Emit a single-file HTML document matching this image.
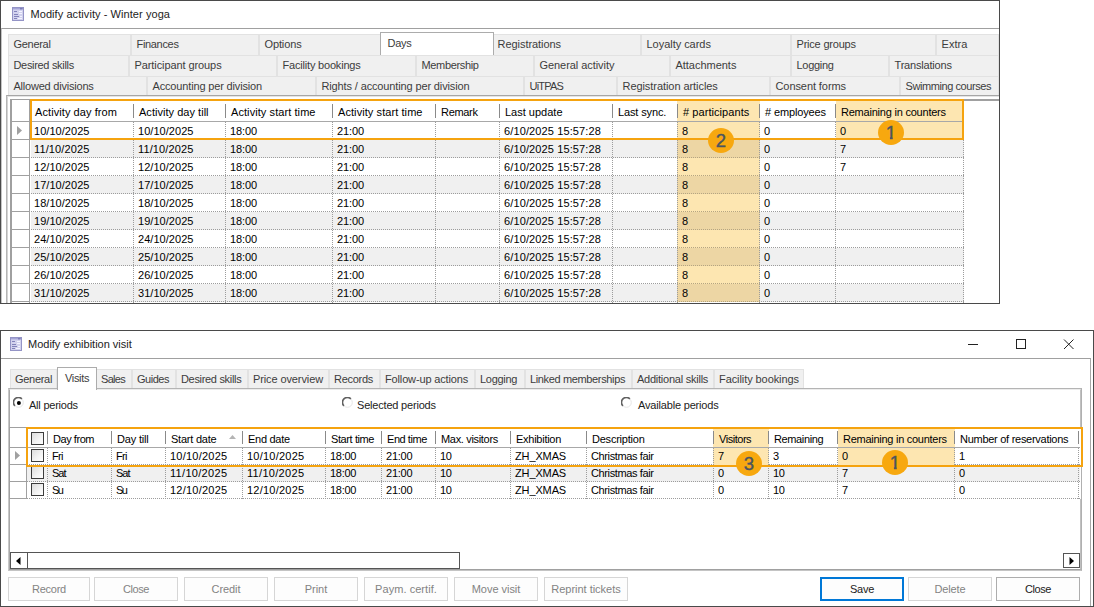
<!DOCTYPE html>
<html><head><meta charset="utf-8"><title>Modify activity</title>
<style>
html,body{margin:0;padding:0;background:#fff;}
body{width:1094px;height:607px;position:relative;overflow:hidden;font-family:"Liberation Sans",Arial,sans-serif;font-size:11px;color:#000;}
.a{position:absolute;box-sizing:border-box;}
.t{position:absolute;white-space:nowrap;line-height:14px;height:14px;}
.tab{position:absolute;box-sizing:border-box;background:#f0f0f0;border:1px solid #e2e2e2;color:#3c3c3c;white-space:nowrap;overflow:hidden;}
.tab span{position:absolute;left:4.5px;top:2px;line-height:14px;}
.seltab{position:absolute;box-sizing:border-box;background:#fff;border:1px solid #acacac;border-bottom:none;color:#3c3c3c;white-space:nowrap;}
.seltab span{position:absolute;left:6.5px;top:3px;line-height:14px;}
.btn{position:absolute;box-sizing:border-box;height:24px;top:577px;border:1px solid #d6d6d6;background:#fdfdfd;color:#838383;text-align:center;line-height:22px;white-space:nowrap;}
.circ{position:absolute;width:26px;height:25px;border-radius:50%;background:#f7a80f;color:#4b5560;font-size:18.5px;line-height:26.4px;text-align:center;-webkit-text-stroke:0.4px #4b5560;}
.one{display:inline-block;clip-path:polygon(0 0,100% 0,100% 17.3px,6.9px 17.3px,6.9px 100%,4.1px 100%,4.1px 17.3px,0 17.3px);}
</style></head><body>

<div class="a" style="left:0;top:0;width:1000px;height:304px;background:#fff;"></div>
<div class="a" style="left:1px;top:28px;width:998px;height:275px;border-top:1px solid #a0a0a0;border-left:1px solid #c4c4c4;"></div>
<svg class="a" style="left:12px;top:7px" width="12" height="14" viewBox="0 0 12 14"><rect x="0.5" y="0.5" width="11" height="13" fill="#d2d2ee" stroke="#9494c6"/><rect x="1" y="1" width="10" height="1.4" fill="#a4a4d6"/><rect x="8" y="1" width="2.5" height="1.4" fill="#7c7cb6"/><g stroke="#8282ba" stroke-width="1"><line x1="2" y1="4.5" x2="5" y2="4.5"/><line x1="2" y1="7.5" x2="6" y2="7.5"/><line x1="2" y1="9.5" x2="7" y2="9.5"/><line x1="2" y1="11.5" x2="5" y2="11.5"/></g><g stroke="#f4f4ff" stroke-width="1"><line x1="7" y1="4.5" x2="10" y2="4.5"/><line x1="7" y1="6.5" x2="10" y2="6.5"/><line x1="8" y1="9.5" x2="10" y2="9.5"/><line x1="6" y1="11.5" x2="10" y2="11.5"/></g></svg>
<div class="t" style="left:30.5px;top:7px;letter-spacing:0.069px;color:#222;">Modify activity - Winter yoga</div>
<div class="tab" style="left:8px;top:34px;width:123px;height:22px;"><span style="letter-spacing:-0.294px">General</span></div>
<div class="tab" style="left:131px;top:34px;width:128px;height:22px;"><span style="letter-spacing:-0.32px">Finances</span></div>
<div class="tab" style="left:259px;top:34px;width:123px;height:22px;"><span style="letter-spacing:-0.12px">Options</span></div>
<div class="tab" style="left:382px;top:34px;width:110px;height:22px;"><span style="letter-spacing:0.0px"></span></div>
<div class="tab" style="left:492px;top:34px;width:149px;height:22px;"><span style="letter-spacing:-0.048px">Registrations</span></div>
<div class="tab" style="left:641px;top:34px;width:150px;height:22px;"><span style="letter-spacing:-0.034px">Loyalty cards</span></div>
<div class="tab" style="left:791px;top:34px;width:145px;height:22px;"><span style="letter-spacing:-0.207px">Price groups</span></div>
<div class="tab" style="left:936px;top:34px;width:63px;height:22px;"><span style="letter-spacing:0.043px">Extra</span></div>
<div class="tab" style="left:8px;top:55px;width:121px;height:22px;"><span style="letter-spacing:-0.32px">Desired skills</span></div>
<div class="tab" style="left:129px;top:55px;width:148px;height:22px;"><span style="letter-spacing:-0.09px">Participant groups</span></div>
<div class="tab" style="left:277px;top:55px;width:139px;height:22px;"><span style="letter-spacing:-0.191px">Facility bookings</span></div>
<div class="tab" style="left:416px;top:55px;width:118px;height:22px;"><span style="letter-spacing:-0.343px">Membership</span></div>
<div class="tab" style="left:534px;top:55px;width:136px;height:22px;"><span style="letter-spacing:-0.059px">General activity</span></div>
<div class="tab" style="left:670px;top:55px;width:121px;height:22px;"><span style="letter-spacing:-0.026px">Attachments</span></div>
<div class="tab" style="left:791px;top:55px;width:98px;height:22px;"><span style="letter-spacing:-0.284px">Logging</span></div>
<div class="tab" style="left:889px;top:55px;width:110px;height:22px;"><span style="letter-spacing:-0.186px">Translations</span></div>
<div class="tab" style="left:8px;top:76px;width:139px;height:21px;"><span style="letter-spacing:-0.217px">Allowed divisions</span></div>
<div class="tab" style="left:147px;top:76px;width:169px;height:21px;"><span style="letter-spacing:-0.156px">Accounting per division</span></div>
<div class="tab" style="left:316px;top:76px;width:208px;height:21px;"><span style="letter-spacing:-0.133px">Rights / accounting per division</span></div>
<div class="tab" style="left:524px;top:76px;width:93px;height:21px;"><span style="letter-spacing:-0.785px">UiTPAS</span></div>
<div class="tab" style="left:617px;top:76px;width:153px;height:21px;"><span style="letter-spacing:-0.063px">Registration articles</span></div>
<div class="tab" style="left:770px;top:76px;width:130px;height:21px;"><span style="letter-spacing:-0.082px">Consent forms</span></div>
<div class="tab" style="left:900px;top:76px;width:99px;height:21px;"><span style="letter-spacing:-0.42px">Swimming courses</span></div>
<div class="seltab" style="left:380px;top:32px;width:114px;height:23px;"><span style="letter-spacing:-0.241px">Days</span></div>
<div class="a" style="left:6px;top:95px;width:993px;height:208px;border-top:1px solid #a6a6a6;border-left:1px solid #b4b4b4;background:#fff;"></div>
<div class="a" style="left:7px;top:96px;width:992px;height:207px;border-top:1px solid #e4e4e4;border-left:1px solid #d4d4d4;background:#fff;"></div>
<div class="a" style="left:10px;top:99px;width:989px;height:204px;border-left:2px solid #a0a0a0;border-top:2px solid #a0a0a0;background:#fff;"></div>
<div class="a" style="left:31px;top:122px;width:933px;height:18px;background:#fff;border-bottom:1px dotted #9c9c9c;"></div>
<div class="a" style="left:31px;top:140px;width:933px;height:18px;background:#f0f0f0;border-bottom:1px dotted #9c9c9c;"></div>
<div class="a" style="left:31px;top:158px;width:933px;height:18px;background:#fff;border-bottom:1px dotted #9c9c9c;"></div>
<div class="a" style="left:31px;top:176px;width:933px;height:18px;background:#f0f0f0;border-bottom:1px dotted #9c9c9c;"></div>
<div class="a" style="left:31px;top:194px;width:933px;height:18px;background:#fff;border-bottom:1px dotted #9c9c9c;"></div>
<div class="a" style="left:31px;top:212px;width:933px;height:18px;background:#f0f0f0;border-bottom:1px dotted #9c9c9c;"></div>
<div class="a" style="left:31px;top:230px;width:933px;height:18px;background:#fff;border-bottom:1px dotted #9c9c9c;"></div>
<div class="a" style="left:31px;top:248px;width:933px;height:18px;background:#f0f0f0;border-bottom:1px dotted #9c9c9c;"></div>
<div class="a" style="left:31px;top:266px;width:933px;height:18px;background:#fff;border-bottom:1px dotted #9c9c9c;"></div>
<div class="a" style="left:31px;top:284px;width:933px;height:18px;background:#f0f0f0;border-bottom:1px dotted #9c9c9c;"></div>
<div class="a" style="left:677px;top:100px;width:83px;height:40px;background:#fde6b1;"></div>
<div class="a" style="left:677px;top:140px;width:83px;height:18px;background:#edd6a4;border-bottom:1px dotted #b5a582;"></div>
<div class="a" style="left:677px;top:158px;width:83px;height:18px;background:#fde6b1;border-bottom:1px dotted #b5a582;"></div>
<div class="a" style="left:677px;top:176px;width:83px;height:18px;background:#edd6a4;border-bottom:1px dotted #b5a582;"></div>
<div class="a" style="left:677px;top:194px;width:83px;height:18px;background:#fde6b1;border-bottom:1px dotted #b5a582;"></div>
<div class="a" style="left:677px;top:212px;width:83px;height:18px;background:#edd6a4;border-bottom:1px dotted #b5a582;"></div>
<div class="a" style="left:677px;top:230px;width:83px;height:18px;background:#fde6b1;border-bottom:1px dotted #b5a582;"></div>
<div class="a" style="left:677px;top:248px;width:83px;height:18px;background:#edd6a4;border-bottom:1px dotted #b5a582;"></div>
<div class="a" style="left:677px;top:266px;width:83px;height:18px;background:#fde6b1;border-bottom:1px dotted #b5a582;"></div>
<div class="a" style="left:677px;top:284px;width:83px;height:18px;background:#edd6a4;border-bottom:1px dotted #b5a582;"></div>
<div class="a" style="left:836px;top:100px;width:127px;height:39px;background:#fde6b1;"></div>
<div class="a" style="left:12px;top:100px;width:18px;height:203px;background:#fff;border-right:1px solid #a0a0a0;"></div>
<div class="a" style="left:12px;top:121px;width:18px;height:1px;background:#a0a0a0;"></div>
<div class="a" style="left:12px;top:139px;width:18px;height:1px;background:#a0a0a0;"></div>
<div class="a" style="left:12px;top:157px;width:18px;height:1px;background:#a0a0a0;"></div>
<div class="a" style="left:12px;top:175px;width:18px;height:1px;background:#a0a0a0;"></div>
<div class="a" style="left:12px;top:193px;width:18px;height:1px;background:#a0a0a0;"></div>
<div class="a" style="left:12px;top:211px;width:18px;height:1px;background:#a0a0a0;"></div>
<div class="a" style="left:12px;top:229px;width:18px;height:1px;background:#a0a0a0;"></div>
<div class="a" style="left:12px;top:247px;width:18px;height:1px;background:#a0a0a0;"></div>
<div class="a" style="left:12px;top:265px;width:18px;height:1px;background:#a0a0a0;"></div>
<div class="a" style="left:12px;top:283px;width:18px;height:1px;background:#a0a0a0;"></div>
<div class="a" style="left:12px;top:301px;width:18px;height:1px;background:#a0a0a0;"></div>
<div class="a" style="left:30px;top:121px;width:934px;height:1px;background:#a8a8a8;"></div>
<div class="a" style="left:133px;top:104px;width:1px;height:14px;background:#8a8a8a;"></div>
<div class="a" style="left:133px;top:122px;width:0;height:181px;border-left:1px dotted #9c9c9c;"></div>
<div class="a" style="left:225px;top:104px;width:1px;height:14px;background:#8a8a8a;"></div>
<div class="a" style="left:225px;top:122px;width:0;height:181px;border-left:1px dotted #9c9c9c;"></div>
<div class="a" style="left:332px;top:104px;width:1px;height:14px;background:#8a8a8a;"></div>
<div class="a" style="left:332px;top:122px;width:0;height:181px;border-left:1px dotted #9c9c9c;"></div>
<div class="a" style="left:435px;top:104px;width:1px;height:14px;background:#8a8a8a;"></div>
<div class="a" style="left:435px;top:122px;width:0;height:181px;border-left:1px dotted #9c9c9c;"></div>
<div class="a" style="left:499px;top:104px;width:1px;height:14px;background:#8a8a8a;"></div>
<div class="a" style="left:499px;top:122px;width:0;height:181px;border-left:1px dotted #9c9c9c;"></div>
<div class="a" style="left:612px;top:104px;width:1px;height:14px;background:#8a8a8a;"></div>
<div class="a" style="left:612px;top:122px;width:0;height:181px;border-left:1px dotted #9c9c9c;"></div>
<div class="a" style="left:677px;top:104px;width:1px;height:14px;background:#8a8a8a;"></div>
<div class="a" style="left:677px;top:122px;width:0;height:181px;border-left:1px dotted #9c9c9c;"></div>
<div class="a" style="left:759px;top:104px;width:1px;height:14px;background:#8a8a8a;"></div>
<div class="a" style="left:759px;top:122px;width:0;height:181px;border-left:1px dotted #9c9c9c;"></div>
<div class="a" style="left:835px;top:104px;width:1px;height:14px;background:#8a8a8a;"></div>
<div class="a" style="left:835px;top:122px;width:0;height:181px;border-left:1px dotted #9c9c9c;"></div>
<div class="a" style="left:963px;top:104px;width:1px;height:14px;background:#8a8a8a;"></div>
<div class="a" style="left:963px;top:122px;width:0;height:181px;border-left:1px dotted #9c9c9c;"></div>
<div class="t" style="left:35px;top:105px;letter-spacing:0.081px;">Activity day from</div>
<div class="t" style="left:139px;top:105px;letter-spacing:0.03px;">Activity day till</div>
<div class="t" style="left:231px;top:105px;letter-spacing:0.076px;">Activity start time</div>
<div class="t" style="left:338px;top:105px;letter-spacing:0.076px;">Activity start time</div>
<div class="t" style="left:441px;top:105px;letter-spacing:-0.317px;">Remark</div>
<div class="t" style="left:505px;top:105px;letter-spacing:0.003px;">Last update</div>
<div class="t" style="left:618px;top:105px;letter-spacing:-0.136px;">Last sync.</div>
<div class="t" style="left:683px;top:105px;letter-spacing:0.067px;"># participants</div>
<div class="t" style="left:765px;top:105px;letter-spacing:-0.137px;"># employees</div>
<div class="t" style="left:841px;top:105px;letter-spacing:-0.219px;">Remaining in counters</div>
<div class="t" style="left:34px;top:124px;letter-spacing:0.048px;">10/10/2025</div>
<div class="t" style="left:138px;top:124px;letter-spacing:0.048px;">10/10/2025</div>
<div class="t" style="left:230px;top:124px;letter-spacing:-0.092px;">18:00</div>
<div class="t" style="left:337px;top:124px;letter-spacing:-0.092px;">21:00</div>
<div class="t" style="left:504px;top:124px;letter-spacing:0.12px;">6/10/2025 15:57:28</div>
<div class="t" style="left:682px;top:124px;letter-spacing:0.0px;">8</div>
<div class="t" style="left:764px;top:124px;letter-spacing:0.0px;">0</div>
<div class="t" style="left:840px;top:124px;letter-spacing:0.0px;">0</div>
<div class="t" style="left:34px;top:142px;letter-spacing:0.129px;">11/10/2025</div>
<div class="t" style="left:138px;top:142px;letter-spacing:0.129px;">11/10/2025</div>
<div class="t" style="left:230px;top:142px;letter-spacing:-0.092px;">18:00</div>
<div class="t" style="left:337px;top:142px;letter-spacing:-0.092px;">21:00</div>
<div class="t" style="left:504px;top:142px;letter-spacing:0.12px;">6/10/2025 15:57:28</div>
<div class="t" style="left:682px;top:142px;letter-spacing:0.0px;">8</div>
<div class="t" style="left:764px;top:142px;letter-spacing:0.0px;">0</div>
<div class="t" style="left:840px;top:142px;letter-spacing:0.0px;">7</div>
<div class="t" style="left:34px;top:160px;letter-spacing:0.048px;">12/10/2025</div>
<div class="t" style="left:138px;top:160px;letter-spacing:0.048px;">12/10/2025</div>
<div class="t" style="left:230px;top:160px;letter-spacing:-0.092px;">18:00</div>
<div class="t" style="left:337px;top:160px;letter-spacing:-0.092px;">21:00</div>
<div class="t" style="left:504px;top:160px;letter-spacing:0.12px;">6/10/2025 15:57:28</div>
<div class="t" style="left:682px;top:160px;letter-spacing:0.0px;">8</div>
<div class="t" style="left:764px;top:160px;letter-spacing:0.0px;">0</div>
<div class="t" style="left:840px;top:160px;letter-spacing:0.0px;">7</div>
<div class="t" style="left:34px;top:178px;letter-spacing:0.048px;">17/10/2025</div>
<div class="t" style="left:138px;top:178px;letter-spacing:0.048px;">17/10/2025</div>
<div class="t" style="left:230px;top:178px;letter-spacing:-0.092px;">18:00</div>
<div class="t" style="left:337px;top:178px;letter-spacing:-0.092px;">21:00</div>
<div class="t" style="left:504px;top:178px;letter-spacing:0.12px;">6/10/2025 15:57:28</div>
<div class="t" style="left:682px;top:178px;letter-spacing:0.0px;">8</div>
<div class="t" style="left:764px;top:178px;letter-spacing:0.0px;">0</div>
<div class="t" style="left:34px;top:196px;letter-spacing:0.048px;">18/10/2025</div>
<div class="t" style="left:138px;top:196px;letter-spacing:0.048px;">18/10/2025</div>
<div class="t" style="left:230px;top:196px;letter-spacing:-0.092px;">18:00</div>
<div class="t" style="left:337px;top:196px;letter-spacing:-0.092px;">21:00</div>
<div class="t" style="left:504px;top:196px;letter-spacing:0.12px;">6/10/2025 15:57:28</div>
<div class="t" style="left:682px;top:196px;letter-spacing:0.0px;">8</div>
<div class="t" style="left:764px;top:196px;letter-spacing:0.0px;">0</div>
<div class="t" style="left:34px;top:214px;letter-spacing:0.048px;">19/10/2025</div>
<div class="t" style="left:138px;top:214px;letter-spacing:0.048px;">19/10/2025</div>
<div class="t" style="left:230px;top:214px;letter-spacing:-0.092px;">18:00</div>
<div class="t" style="left:337px;top:214px;letter-spacing:-0.092px;">21:00</div>
<div class="t" style="left:504px;top:214px;letter-spacing:0.12px;">6/10/2025 15:57:28</div>
<div class="t" style="left:682px;top:214px;letter-spacing:0.0px;">8</div>
<div class="t" style="left:764px;top:214px;letter-spacing:0.0px;">0</div>
<div class="t" style="left:34px;top:232px;letter-spacing:0.048px;">24/10/2025</div>
<div class="t" style="left:138px;top:232px;letter-spacing:0.048px;">24/10/2025</div>
<div class="t" style="left:230px;top:232px;letter-spacing:-0.092px;">18:00</div>
<div class="t" style="left:337px;top:232px;letter-spacing:-0.092px;">21:00</div>
<div class="t" style="left:504px;top:232px;letter-spacing:0.12px;">6/10/2025 15:57:28</div>
<div class="t" style="left:682px;top:232px;letter-spacing:0.0px;">8</div>
<div class="t" style="left:764px;top:232px;letter-spacing:0.0px;">0</div>
<div class="t" style="left:34px;top:250px;letter-spacing:0.048px;">25/10/2025</div>
<div class="t" style="left:138px;top:250px;letter-spacing:0.048px;">25/10/2025</div>
<div class="t" style="left:230px;top:250px;letter-spacing:-0.092px;">18:00</div>
<div class="t" style="left:337px;top:250px;letter-spacing:-0.092px;">21:00</div>
<div class="t" style="left:504px;top:250px;letter-spacing:0.12px;">6/10/2025 15:57:28</div>
<div class="t" style="left:682px;top:250px;letter-spacing:0.0px;">8</div>
<div class="t" style="left:764px;top:250px;letter-spacing:0.0px;">0</div>
<div class="t" style="left:34px;top:268px;letter-spacing:0.048px;">26/10/2025</div>
<div class="t" style="left:138px;top:268px;letter-spacing:0.048px;">26/10/2025</div>
<div class="t" style="left:230px;top:268px;letter-spacing:-0.092px;">18:00</div>
<div class="t" style="left:337px;top:268px;letter-spacing:-0.092px;">21:00</div>
<div class="t" style="left:504px;top:268px;letter-spacing:0.12px;">6/10/2025 15:57:28</div>
<div class="t" style="left:682px;top:268px;letter-spacing:0.0px;">8</div>
<div class="t" style="left:764px;top:268px;letter-spacing:0.0px;">0</div>
<div class="t" style="left:34px;top:286px;letter-spacing:0.048px;">31/10/2025</div>
<div class="t" style="left:138px;top:286px;letter-spacing:0.048px;">31/10/2025</div>
<div class="t" style="left:230px;top:286px;letter-spacing:-0.092px;">18:00</div>
<div class="t" style="left:337px;top:286px;letter-spacing:-0.092px;">21:00</div>
<div class="t" style="left:504px;top:286px;letter-spacing:0.12px;">6/10/2025 15:57:28</div>
<div class="t" style="left:682px;top:286px;letter-spacing:0.0px;">8</div>
<div class="t" style="left:764px;top:286px;letter-spacing:0.0px;">0</div>
<svg class="a" style="left:17px;top:126px" width="6" height="9" viewBox="0 0 6 9"><polygon points="0,0 5,4.5 0,9" fill="#a0a0a0"/></svg>
<div class="a" style="left:30px;top:99px;width:934px;height:41px;border:2px solid #f5a30f;"></div>
<div class="circ" style="left:708px;top:127.5px;">2</div>
<div class="circ" style="left:878px;top:119.5px;"><span class="one">1</span></div>
<div class="a" style="left:0;top:0;width:1000px;height:304px;border:1px solid #4a4a4a;"></div>
<div class="a" style="left:0;top:330px;width:1094px;height:277px;border:1px solid #4a4a4a;background:#fff;"></div>
<div class="a" style="left:1px;top:358px;width:1090px;height:248px;border-top:1px solid #a0a0a0;border-right:1px solid #a8a8a8;"></div>
<svg class="a" style="left:10px;top:337px" width="12" height="14" viewBox="0 0 12 14"><rect x="0.5" y="0.5" width="11" height="13" fill="#d2d2ee" stroke="#9494c6"/><rect x="1" y="1" width="10" height="1.4" fill="#a4a4d6"/><rect x="8" y="1" width="2.5" height="1.4" fill="#7c7cb6"/><g stroke="#8282ba" stroke-width="1"><line x1="2" y1="4.5" x2="5" y2="4.5"/><line x1="2" y1="7.5" x2="6" y2="7.5"/><line x1="2" y1="9.5" x2="7" y2="9.5"/><line x1="2" y1="11.5" x2="5" y2="11.5"/></g><g stroke="#f4f4ff" stroke-width="1"><line x1="7" y1="4.5" x2="10" y2="4.5"/><line x1="7" y1="6.5" x2="10" y2="6.5"/><line x1="8" y1="9.5" x2="10" y2="9.5"/><line x1="6" y1="11.5" x2="10" y2="11.5"/></g></svg>
<div class="t" style="left:28px;top:337px;letter-spacing:-0.007px;color:#222;">Modify exhibition visit</div>
<svg class="a" style="left:960px;top:334px" width="125" height="20" viewBox="0 0 125 20"><g stroke="#222" stroke-width="1" fill="none"><line x1="8" y1="10.5" x2="18" y2="10.5"/><rect x="56.5" y="5.5" width="9" height="9"/><line x1="104" y1="5.5" x2="113.5" y2="15"/><line x1="113.5" y1="5.5" x2="104" y2="15"/></g></svg>
<div class="tab" style="left:10px;top:369px;width:47px;height:20px;"><span style="left:4px;letter-spacing:-0.294px">General</span></div>
<div class="tab" style="left:57px;top:369px;width:39px;height:20px;"><span style="left:4px;letter-spacing:0.0px"></span></div>
<div class="tab" style="left:96px;top:369px;width:36px;height:20px;"><span style="left:4px;letter-spacing:-0.686px">Sales</span></div>
<div class="tab" style="left:132px;top:369px;width:44px;height:20px;"><span style="left:4px;letter-spacing:-0.479px">Guides</span></div>
<div class="tab" style="left:176px;top:369px;width:72px;height:20px;"><span style="left:4px;letter-spacing:-0.32px">Desired skills</span></div>
<div class="tab" style="left:248px;top:369px;width:81px;height:20px;"><span style="left:4px;letter-spacing:-0.109px">Price overview</span></div>
<div class="tab" style="left:329px;top:369px;width:51px;height:20px;"><span style="left:4px;letter-spacing:-0.267px">Records</span></div>
<div class="tab" style="left:380px;top:369px;width:95px;height:20px;"><span style="left:4px;letter-spacing:-0.149px">Follow-up actions</span></div>
<div class="tab" style="left:475px;top:369px;width:50px;height:20px;"><span style="left:4px;letter-spacing:-0.284px">Logging</span></div>
<div class="tab" style="left:525px;top:369px;width:107px;height:20px;"><span style="left:4px;letter-spacing:-0.357px">Linked memberships</span></div>
<div class="tab" style="left:632px;top:369px;width:82px;height:20px;"><span style="left:4px;letter-spacing:-0.242px">Additional skills</span></div>
<div class="tab" style="left:714px;top:369px;width:90px;height:20px;"><span style="left:4px;letter-spacing:-0.079px">Facility bookings</span></div>
<div class="a" style="left:8px;top:388px;width:1074px;height:183px;border:1px solid;border-color:#b4b4b4 #b0b0b0 #c4c4c4 #c8c8c8;background:#fff;"></div>
<div class="a" style="left:9px;top:389px;width:1072px;height:181px;border:1px solid;border-color:#ececec #c0c0c0 #a0a0a0 #a8a8a8;background:#fff;"></div>
<div class="seltab" style="left:57px;top:367px;width:40px;height:23px;"><span style="left:7px;top:3px;letter-spacing:-0.33px">Visits</span></div>
<svg class="a" style="left:13px;top:397px" width="12" height="12" viewBox="0 0 12 12"><circle cx="5.5" cy="5.5" r="4.8" fill="#fff" stroke="#e6e6e6" stroke-width="1"/><path d="M1.9 8.9 A4.8 4.8 0 0 1 8.9 1.9" fill="none" stroke="#606060" stroke-width="1.6"/><circle cx="5.9" cy="5.9" r="2" fill="#000"/></svg>
<svg class="a" style="left:342px;top:397px" width="12" height="12" viewBox="0 0 12 12"><circle cx="5.5" cy="5.5" r="4.8" fill="#fff" stroke="#e6e6e6" stroke-width="1"/><path d="M1.9 8.9 A4.8 4.8 0 0 1 8.9 1.9" fill="none" stroke="#606060" stroke-width="1.6"/></svg>
<svg class="a" style="left:621px;top:397px" width="12" height="12" viewBox="0 0 12 12"><circle cx="5.5" cy="5.5" r="4.8" fill="#fff" stroke="#e6e6e6" stroke-width="1"/><path d="M1.9 8.9 A4.8 4.8 0 0 1 8.9 1.9" fill="none" stroke="#606060" stroke-width="1.6"/></svg>
<div class="t" style="left:29px;top:398px;letter-spacing:-0.225px;color:#222;">All periods</div>
<div class="t" style="left:357px;top:398px;letter-spacing:-0.194px;color:#222;">Selected periods</div>
<div class="t" style="left:638px;top:398px;letter-spacing:-0.177px;color:#222;">Available periods</div>
<div class="a" style="left:9px;top:427px;width:1072px;height:72px;border-top:1px solid #a0a0a0;border-left:1px solid #a0a0a0;background:#fff;"></div>
<div class="a" style="left:27px;top:448px;width:1053px;height:17px;background:#fff;border-bottom:1px dotted #9c9c9c;"></div>
<div class="a" style="left:27px;top:465px;width:1053px;height:17px;background:#f0f0f0;border-bottom:1px dotted #9c9c9c;"></div>
<div class="a" style="left:27px;top:482px;width:1053px;height:17px;background:#fff;border-bottom:1px dotted #9c9c9c;"></div>
<div class="a" style="left:713px;top:427px;width:56px;height:38px;background:#fde6b1;"></div>
<div class="a" style="left:838px;top:429px;width:117px;height:36px;background:#fde6b1;"></div>
<div class="a" style="left:10px;top:428px;width:17px;height:71px;background:#fff;border-right:1px solid #a0a0a0;"></div>
<div class="a" style="left:10px;top:447px;width:17px;height:1px;background:#a0a0a0;"></div>
<div class="a" style="left:10px;top:464px;width:17px;height:1px;background:#a0a0a0;"></div>
<div class="a" style="left:10px;top:481px;width:17px;height:1px;background:#a0a0a0;"></div>
<div class="a" style="left:10px;top:498px;width:17px;height:1px;background:#a0a0a0;"></div>
<div class="a" style="left:27px;top:447px;width:1053px;height:1px;background:#a8a8a8;"></div>
<div class="a" style="left:47px;top:431px;width:1px;height:13px;background:#8a8a8a;"></div>
<div class="a" style="left:47px;top:448px;width:0;height:51px;border-left:1px dotted #9c9c9c;"></div>
<div class="a" style="left:111px;top:431px;width:1px;height:13px;background:#8a8a8a;"></div>
<div class="a" style="left:111px;top:448px;width:0;height:51px;border-left:1px dotted #9c9c9c;"></div>
<div class="a" style="left:165px;top:431px;width:1px;height:13px;background:#8a8a8a;"></div>
<div class="a" style="left:165px;top:448px;width:0;height:51px;border-left:1px dotted #9c9c9c;"></div>
<div class="a" style="left:242px;top:431px;width:1px;height:13px;background:#8a8a8a;"></div>
<div class="a" style="left:242px;top:448px;width:0;height:51px;border-left:1px dotted #9c9c9c;"></div>
<div class="a" style="left:325px;top:431px;width:1px;height:13px;background:#8a8a8a;"></div>
<div class="a" style="left:325px;top:448px;width:0;height:51px;border-left:1px dotted #9c9c9c;"></div>
<div class="a" style="left:381px;top:431px;width:1px;height:13px;background:#8a8a8a;"></div>
<div class="a" style="left:381px;top:448px;width:0;height:51px;border-left:1px dotted #9c9c9c;"></div>
<div class="a" style="left:435px;top:431px;width:1px;height:13px;background:#8a8a8a;"></div>
<div class="a" style="left:435px;top:448px;width:0;height:51px;border-left:1px dotted #9c9c9c;"></div>
<div class="a" style="left:510px;top:431px;width:1px;height:13px;background:#8a8a8a;"></div>
<div class="a" style="left:510px;top:448px;width:0;height:51px;border-left:1px dotted #9c9c9c;"></div>
<div class="a" style="left:586px;top:431px;width:1px;height:13px;background:#8a8a8a;"></div>
<div class="a" style="left:586px;top:448px;width:0;height:51px;border-left:1px dotted #9c9c9c;"></div>
<div class="a" style="left:713px;top:431px;width:1px;height:13px;background:#8a8a8a;"></div>
<div class="a" style="left:713px;top:448px;width:0;height:51px;border-left:1px dotted #9c9c9c;"></div>
<div class="a" style="left:768px;top:431px;width:1px;height:13px;background:#8a8a8a;"></div>
<div class="a" style="left:768px;top:448px;width:0;height:51px;border-left:1px dotted #9c9c9c;"></div>
<div class="a" style="left:837px;top:431px;width:1px;height:13px;background:#8a8a8a;"></div>
<div class="a" style="left:837px;top:448px;width:0;height:51px;border-left:1px dotted #9c9c9c;"></div>
<div class="a" style="left:954px;top:431px;width:1px;height:13px;background:#8a8a8a;"></div>
<div class="a" style="left:954px;top:448px;width:0;height:51px;border-left:1px dotted #9c9c9c;"></div>
<div class="a" style="left:1078px;top:431px;width:1px;height:13px;background:#8a8a8a;"></div>
<div class="a" style="left:1078px;top:448px;width:0;height:51px;border-left:1px dotted #9c9c9c;"></div>
<div class="t" style="left:53px;top:432px;letter-spacing:-0.441px;">Day from</div>
<div class="t" style="left:117px;top:432px;letter-spacing:-0.175px;">Day till</div>
<div class="t" style="left:171px;top:432px;letter-spacing:-0.235px;">Start date</div>
<div class="t" style="left:248px;top:432px;letter-spacing:-0.287px;">End date</div>
<div class="t" style="left:331px;top:432px;letter-spacing:-0.399px;">Start time</div>
<div class="t" style="left:387px;top:432px;letter-spacing:-0.442px;">End time</div>
<div class="t" style="left:441px;top:432px;letter-spacing:-0.325px;">Max. visitors</div>
<div class="t" style="left:516px;top:432px;letter-spacing:-0.262px;">Exhibition</div>
<div class="t" style="left:592px;top:432px;letter-spacing:-0.221px;">Description</div>
<div class="t" style="left:719px;top:432px;letter-spacing:-0.47px;">Visitors</div>
<div class="t" style="left:774px;top:432px;letter-spacing:-0.377px;">Remaining</div>
<div class="t" style="left:843px;top:432px;letter-spacing:-0.267px;">Remaining in counters</div>
<div class="t" style="left:960px;top:432px;letter-spacing:-0.276px;">Number of reservations</div>
<div class="t" style="left:52px;top:449px;letter-spacing:-0.738px;">Fri</div>
<div class="t" style="left:116px;top:449px;letter-spacing:-0.738px;">Fri</div>
<div class="t" style="left:170px;top:449px;letter-spacing:0.227px;">10/10/2025</div>
<div class="t" style="left:247px;top:449px;letter-spacing:0.227px;">10/10/2025</div>
<div class="t" style="left:330px;top:449px;letter-spacing:-0.272px;">18:00</div>
<div class="t" style="left:386px;top:449px;letter-spacing:-0.232px;">21:00</div>
<div class="t" style="left:440px;top:449px;letter-spacing:-0.425px;">10</div>
<div class="t" style="left:515px;top:449px;letter-spacing:-0.124px;">ZH_XMAS</div>
<div class="t" style="left:591px;top:449px;letter-spacing:-0.375px;">Christmas fair</div>
<div class="t" style="left:718px;top:449px;letter-spacing:0.0px;">7</div>
<div class="t" style="left:773px;top:449px;letter-spacing:0.0px;">3</div>
<div class="t" style="left:842px;top:449px;letter-spacing:0.0px;">0</div>
<div class="t" style="left:959px;top:449px;letter-spacing:0.0px;">1</div>
<div class="t" style="left:52px;top:466px;letter-spacing:-0.977px;">Sat</div>
<div class="t" style="left:116px;top:466px;letter-spacing:-0.977px;">Sat</div>
<div class="t" style="left:170px;top:466px;letter-spacing:0.309px;">11/10/2025</div>
<div class="t" style="left:247px;top:466px;letter-spacing:0.309px;">11/10/2025</div>
<div class="t" style="left:330px;top:466px;letter-spacing:-0.272px;">18:00</div>
<div class="t" style="left:386px;top:466px;letter-spacing:-0.232px;">21:00</div>
<div class="t" style="left:440px;top:466px;letter-spacing:-0.425px;">10</div>
<div class="t" style="left:515px;top:466px;letter-spacing:-0.124px;">ZH_XMAS</div>
<div class="t" style="left:591px;top:466px;letter-spacing:-0.375px;">Christmas fair</div>
<div class="t" style="left:718px;top:466px;letter-spacing:0.0px;">0</div>
<div class="t" style="left:773px;top:466px;letter-spacing:-0.425px;">10</div>
<div class="t" style="left:842px;top:466px;letter-spacing:0.0px;">7</div>
<div class="t" style="left:959px;top:466px;letter-spacing:0.0px;">0</div>
<div class="t" style="left:52px;top:483px;letter-spacing:-1.684px;">Su</div>
<div class="t" style="left:116px;top:483px;letter-spacing:-1.684px;">Su</div>
<div class="t" style="left:170px;top:483px;letter-spacing:0.227px;">12/10/2025</div>
<div class="t" style="left:247px;top:483px;letter-spacing:0.227px;">12/10/2025</div>
<div class="t" style="left:330px;top:483px;letter-spacing:-0.272px;">18:00</div>
<div class="t" style="left:386px;top:483px;letter-spacing:-0.232px;">21:00</div>
<div class="t" style="left:440px;top:483px;letter-spacing:-0.425px;">10</div>
<div class="t" style="left:515px;top:483px;letter-spacing:-0.124px;">ZH_XMAS</div>
<div class="t" style="left:591px;top:483px;letter-spacing:-0.375px;">Christmas fair</div>
<div class="t" style="left:718px;top:483px;letter-spacing:0.0px;">0</div>
<div class="t" style="left:773px;top:483px;letter-spacing:-0.425px;">10</div>
<div class="t" style="left:842px;top:483px;letter-spacing:0.0px;">7</div>
<div class="t" style="left:959px;top:483px;letter-spacing:0.0px;">0</div>
<div class="a" style="left:31px;top:432px;width:13px;height:13px;border:1px solid #3c3c3c;background:linear-gradient(135deg,#dcdcdc,#f4f4f4 60%,#fff);"></div>
<div class="a" style="left:31px;top:449px;width:13px;height:13px;border:1px solid #3c3c3c;background:linear-gradient(135deg,#dcdcdc,#f4f4f4 60%,#fff);"></div>
<div class="a" style="left:31px;top:466px;width:13px;height:13px;border:1px solid #3c3c3c;background:linear-gradient(135deg,#dcdcdc,#f4f4f4 60%,#fff);"></div>
<div class="a" style="left:31px;top:483px;width:13px;height:13px;border:1px solid #3c3c3c;background:linear-gradient(135deg,#dcdcdc,#f4f4f4 60%,#fff);"></div>
<svg class="a" style="left:229px;top:435px" width="7" height="4" viewBox="0 0 7 4"><polygon points="0,4 3.5,0 7,4" fill="#b4b4b4"/></svg>
<svg class="a" style="left:15px;top:451px" width="6" height="9" viewBox="0 0 6 9"><polygon points="0,0 5,4.5 0,9" fill="#a0a0a0"/></svg>
<div class="a" style="left:26px;top:427px;width:1057px;height:40px;border:2px solid #f5a30f;"></div>
<div class="circ" style="left:736px;top:450.5px;">3</div>
<div class="circ" style="left:882px;top:449.5px;"><span class="one">1</span></div>
<div class="a" style="left:10px;top:552px;width:18px;height:17px;border:1px solid #555;background:#fff;"></div>
<svg class="a" style="left:16px;top:557px" width="5" height="8" viewBox="0 0 5 8"><polygon points="4.5,0 0,4 4.5,8" fill="#000"/></svg>
<div class="a" style="left:27px;top:552px;width:433px;height:17px;border:1px solid #555;background:#fff;"></div>
<div class="a" style="left:1063px;top:553px;width:17px;height:15px;border:1px solid #555;background:#fff;"></div>
<svg class="a" style="left:1069px;top:557px" width="5" height="8" viewBox="0 0 5 8"><polygon points="0.5,0 5,4 0.5,8" fill="#000"/></svg>
<div class="btn" style="left:8px;width:82px;letter-spacing:-0.261px">Record</div>
<div class="btn" style="left:94px;width:84px;letter-spacing:-0.465px">Close</div>
<div class="btn" style="left:184px;width:84px;letter-spacing:-0.074px">Credit</div>
<div class="btn" style="left:274px;width:84px;letter-spacing:-0.065px">Print</div>
<div class="btn" style="left:364px;width:84px;letter-spacing:0.057px">Paym. certif.</div>
<div class="btn" style="left:454px;width:84px;letter-spacing:-0.031px">Move visit</div>
<div class="btn" style="left:544px;width:84px;letter-spacing:-0.028px">Reprint tickets</div>
<div class="btn" style="left:820px;width:84px;border:2px solid #0078d7;color:#222;line-height:20px;letter-spacing:-0.273px">Save</div>
<div class="btn" style="left:908px;width:84px;letter-spacing:-0.135px">Delete</div>
<div class="btn" style="left:996px;width:84px;border-color:#adadad;color:#222;letter-spacing:-0.465px">Close</div>
</body></html>
